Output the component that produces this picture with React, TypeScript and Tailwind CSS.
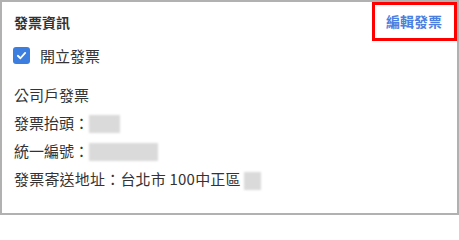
const Blur = ({ w }: { w: string }) => (
  <span className={`inline-block ${w} h-[18px] bg-[#dadada] blur-[1px] align-middle`} />
)

const App = () => {
  return (
    <div className="w-[459px] h-[215px] border-2 border-[#b1b1b1] bg-white font-['Noto_Sans_CJK_TC','Noto_Sans',sans-serif] text-[#333]">
      <div className="flex justify-between items-center h-[39px]">
        <h2 className="pl-3 text-[14px] font-bold leading-5 text-[#333]">發票資訊</h2>
        <button className="h-[39px] w-[85px] border-[3px] border-[#ff0000] pl-[11px] text-left text-[14px] font-bold text-[#4b7fe0]">
          編輯發票
        </button>
      </div>

      <label className="mt-[1px] h-[26px] pl-[11px] flex items-center gap-[10px]">
        <span className="w-[17px] h-[17px] rounded-[3px] bg-[#3b7ee0] flex items-center justify-center">
          <svg width="11" height="11" viewBox="0 0 12 12" fill="none">
            <path d="M2 6.3L4.8 9L10 3.2" stroke="white" strokeWidth="2" strokeLinecap="round" strokeLinejoin="round" />
          </svg>
        </span>
        <span className="text-[15px] leading-none">開立發票</span>
      </label>

      <div className="mt-[13.5px] pl-3 text-[15px]">
        <div className="h-[28px] flex items-center">公司戶發票</div>
        <div className="h-[28px] flex items-center">
          發票抬頭：<Blur w="w-[31px]" />
        </div>
        <div className="h-[28px] flex items-center">
          統一編號：<Blur w="w-[69px]" />
        </div>
        <div className="h-[28px] flex items-center tracking-[0.2px]">
          發票寄送地址：台北市 100中正區
          <span className="ml-[3px]">
            <Blur w="w-[17px]" />
          </span>
        </div>
      </div>
    </div>
  )
}

export default App
